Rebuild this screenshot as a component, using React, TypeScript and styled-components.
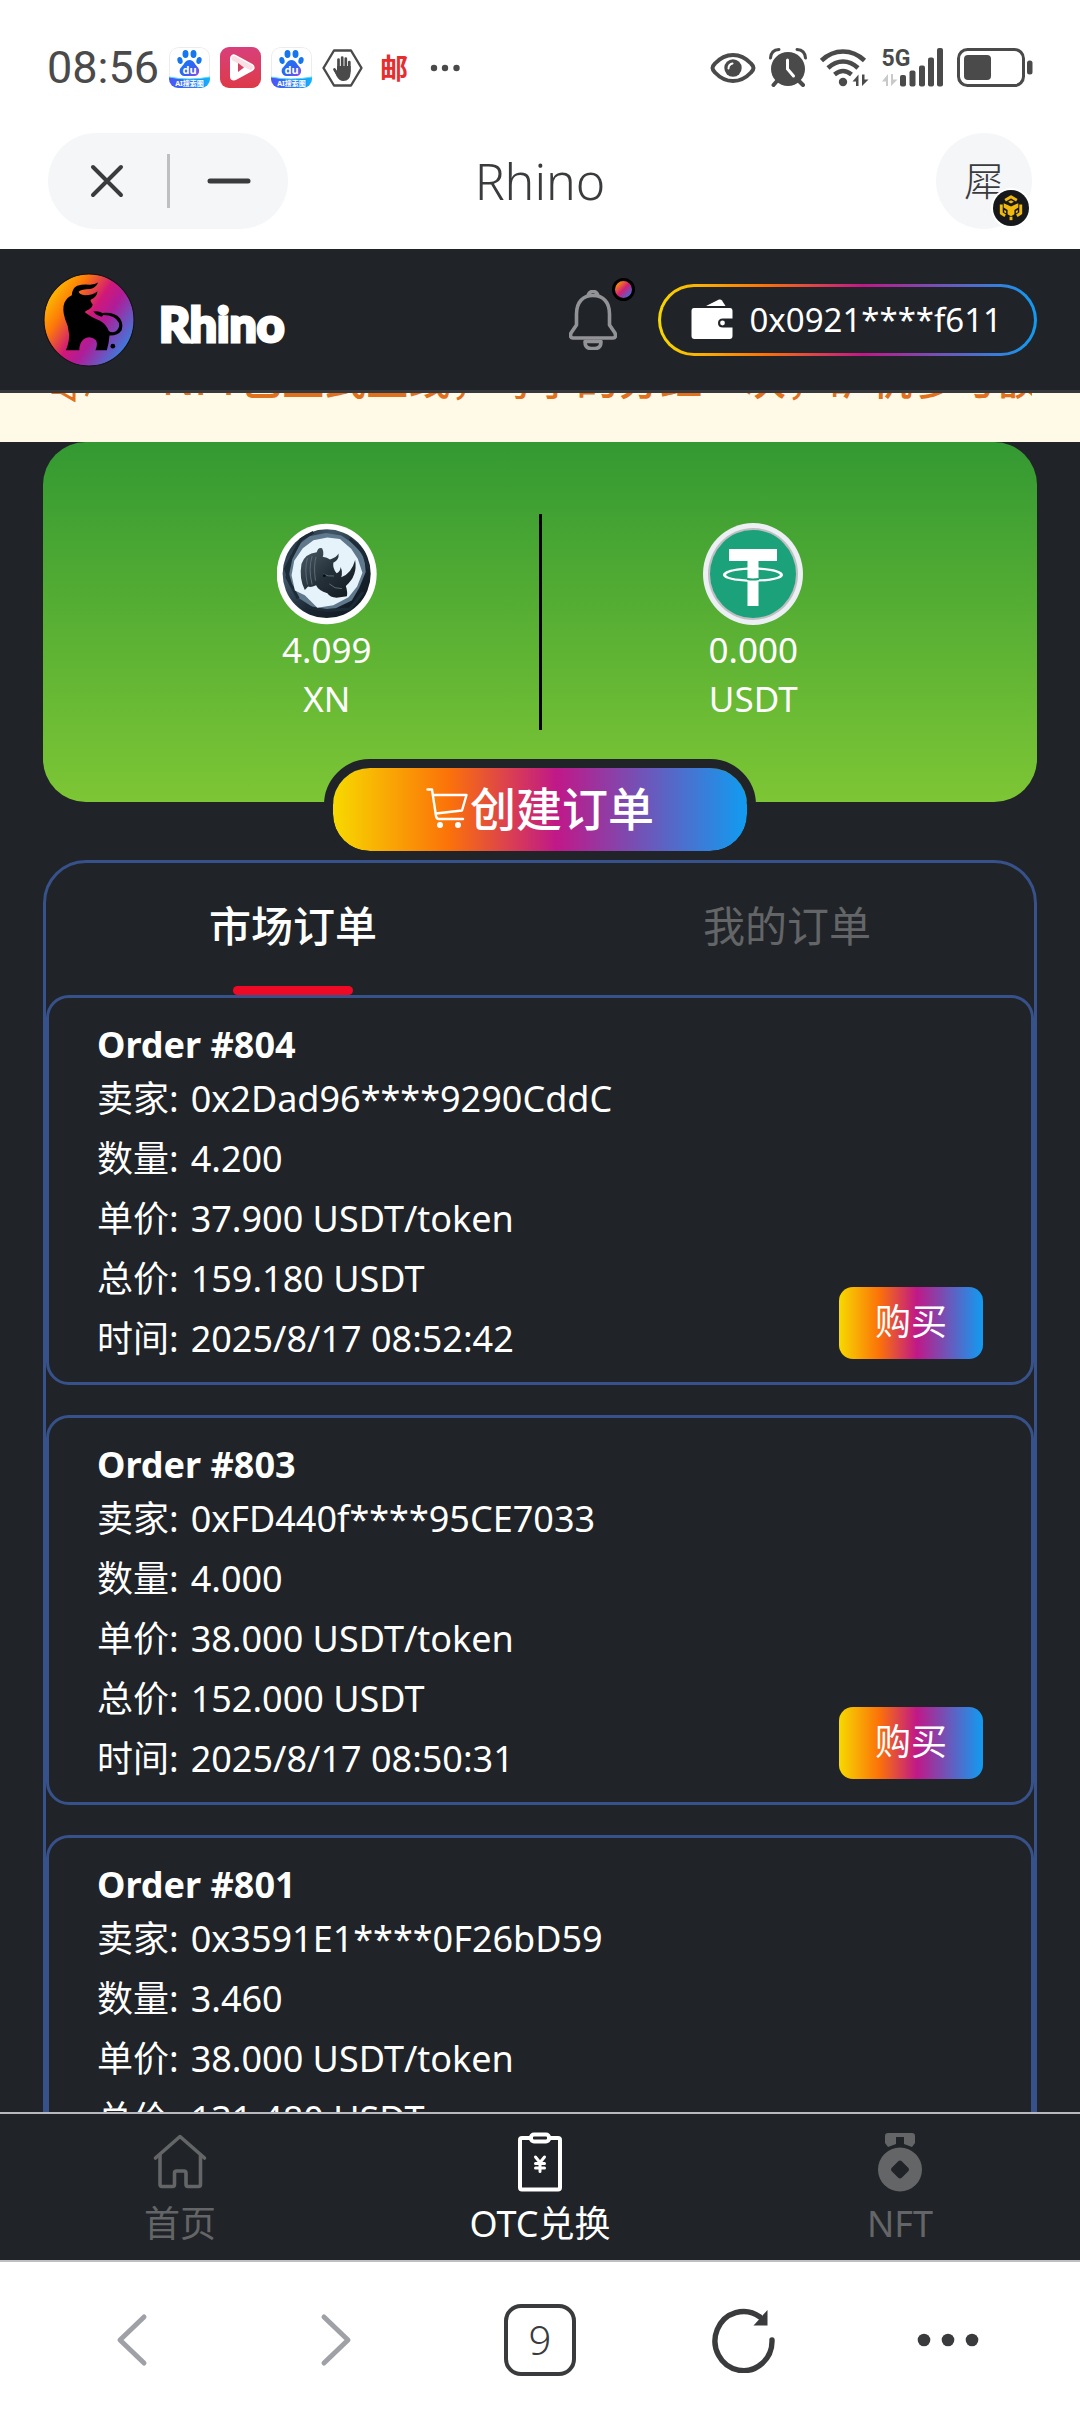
import React, { useState } from "react";
import styled, { createGlobalStyle } from "styled-components";

const RAINBOW = "linear-gradient(90deg, #f7d900 0%, #fb7209 28%, #c01888 54%, #109cf1 100%)";
const DARK = "#202328";
const BLUE = "#37518a";
const INK = "#3a3b3d";
const MUTED = "#646566";

const GlobalStyle = createGlobalStyle`
  *, *::before, *::after { box-sizing: border-box; }
  body {
    margin: 0;
    background: #fff;
    font-family: "Noto Sans", "Noto Sans CJK SC", sans-serif;
    font-size: 36px;
  }
  h1, h2, p, ul, dl, dd, dt { margin: 0; padding: 0; }
  ul { list-style: none; }
  button {
    font: inherit;
    color: inherit;
    background: none;
    border: 0;
    padding: 0;
    cursor: pointer;
  }
  svg { display: block; flex: none; }
`;

const Screen = styled.div`
  display: flex;
  flex-direction: column;
  height: 100vh;
  overflow: hidden;
  background: #fff;
`;

/* ---------- phone status bar ---------- */

const StatusBar = styled.div`
  flex: none;
  display: flex;
  align-items: center;
  justify-content: space-between;
  height: 133px;
  padding: 2px 47px 0;
  color: #4a4a4a;
`;

const StatusGroup = styled.div<{ $gap: number }>`
  display: flex;
  align-items: center;
  gap: ${(p) => p.$gap}px;
`;

const Clock = styled.span`
  font-family: Roboto, sans-serif;
  font-size: 45px;
  line-height: 48px;
`;

const MailMark = styled.span`
  width: 30px;
  margin: 0 11px 0 6px;
  text-align: center;
  font-size: 28px;
  line-height: 40px;
  font-weight: 700;
  color: #e62e2e;
`;

/* ---------- browser title bar ---------- */

const TitleBar = styled.header`
  flex: none;
  display: grid;
  grid-template-columns: 1fr auto 1fr;
  align-items: center;
  padding: 0 48px 20px;
  color: ${INK};
`;

const Capsule = styled.div`
  display: flex;
  align-items: center;
  width: 240px;
  height: 96px;
  border-radius: 48px;
  background: #f4f6f8;
`;

const CapsuleButton = styled.button`
  flex: 1;
  height: 96px;
  display: grid;
  place-items: center;
`;

const CapsuleLine = styled.span`
  width: 3px;
  height: 54px;
  background: #bcc0c1;
`;

const PageTitle = styled.h1`
  font-size: 50px;
  line-height: 64px;
  font-weight: 300;
`;

const Avatar = styled.button`
  position: relative;
  justify-self: end;
  width: 96px;
  height: 96px;
  border-radius: 50%;
  background: #f4f6f8;
  font-size: 40px;
  line-height: 96px;
  font-weight: 300;
`;

const ChainBadge = styled.span`
  position: absolute;
  right: 1px;
  bottom: 1px;
  border-radius: 50%;
  border: 2px solid #fff;
`;

/* ---------- app header ---------- */

const AppHeader = styled.header`
  flex: none;
  display: flex;
  align-items: center;
  height: 144px;
  padding: 0 43px;
  background: ${DARK};
  border-bottom: 3px solid #35393d;
  color: #fff;
`;

const Brand = styled.a`
  display: flex;
  align-items: center;
  gap: 24px;
  margin-right: auto;
  color: #fff;
  text-decoration: none;
`;

const BrandName = styled.span`
  padding-top: 8px;
  font-family: Lato, sans-serif;
  font-size: 48px;
  line-height: 56px;
  font-weight: 900;
  -webkit-text-stroke: 3px #fff;
`;

const BellButton = styled.button`
  position: relative;
  width: 48px;
  height: 60px;
  margin-right: 41px;
`;

const BellDot = styled.span`
  position: absolute;
  top: -12px;
  right: -18px;
  width: 23px;
  height: 23px;
  border: 3px solid #000;
  border-radius: 50%;
  background: linear-gradient(135deg, #fb8a09 15%, #d01f78 50%, #3d6fd8 90%);
`;

const WalletButton = styled.button`
  display: flex;
  align-items: center;
  gap: 16px;
  height: 72px;
  padding: 0 32px 0 30px;
  border: 3px solid transparent;
  border-radius: 36px;
  background: linear-gradient(${DARK}, ${DARK}) padding-box, ${RAINBOW} border-box;
  font-size: 33px;
  line-height: 48px;
`;

/* ---------- scrolled content ---------- */

const Content = styled.main`
  flex: 1;
  min-height: 0;
  overflow: hidden;
  background: ${DARK};
  color: #fff;
`;

const Notice = styled.div`
  display: flex;
  align-items: flex-end;
  gap: 60px;
  height: 49px;
  padding: 0 48px 33px 51px;
  overflow: hidden;
  background: #fff9e8;
  color: #e0701c;

  svg {
    margin-bottom: 7px;
  }
`;

const NoticeText = styled.p`
  flex: 1;
  min-width: 0;
  overflow: hidden;
  white-space: nowrap;
  font-size: 42px;
  line-height: 60px;
  font-weight: 500;
`;

const BalanceCard = styled.section`
  display: grid;
  grid-template-columns: 1fr 3px 1fr;
  align-items: center;
  margin: 0 43px;
  padding: 72px 0;
  border-radius: 43px;
  background: linear-gradient(180deg, #339932 0%, #7dc635 100%);
`;

const BalanceLine = styled.span`
  height: 216px;
  background: #000;
`;

const Balance = styled.div<{ $side: "left" | "right" }>`
  display: flex;
  flex-direction: column;
  align-items: center;
  padding-top: 2px;
  padding-left: ${(p) => (p.$side === "left" ? "72px" : "0")};
  padding-right: ${(p) => (p.$side === "right" ? "72px" : "0")};
`;

const BalanceText = styled.span`
  font-size: 35px;
  line-height: 49px;
`;

const CreateButton = styled.button`
  position: relative;
  display: flex;
  align-items: center;
  justify-content: center;
  gap: 2px;
  width: 432px;
  height: 101px;
  margin: -43px auto 0;
  padding-bottom: 4px;
  border: 9px solid ${DARK};
  border-radius: 46px;
  background: ${RAINBOW} padding-box;
  font-size: 46px;
  line-height: 60px;
  font-weight: 500;
  color: #fff;
`;

const Panel = styled.section`
  margin: 0 43px;
  border: 3px solid ${BLUE};
  border-radius: 43px 43px 0 0;
`;

const Tabs = styled.div`
  display: flex;
`;

const Tab = styled.button<{ $active: boolean }>`
  position: relative;
  flex: 1;
  height: 132px;
  padding-bottom: 6px;
  font-size: 42px;
  line-height: 60px;
  font-weight: ${(p) => (p.$active ? 500 : 400)};
  color: ${(p) => (p.$active ? "#fff" : MUTED)};
`;

const TabMarker = styled.span`
  position: absolute;
  left: 50%;
  bottom: 0;
  width: 120px;
  height: 9px;
  margin-left: -60px;
  border-radius: 9px;
  background: #ee0a24;
`;

const OrderList = styled.ul`
  display: flex;
  flex-direction: column;
  gap: 30px;
`;

const OrderCard = styled.li`
  display: flex;
  align-items: flex-end;
  justify-content: space-between;
  padding: 23px 48px 13px;
  border: 3px solid ${BLUE};
  border-radius: 23px;
`;

const OrderTitle = styled.h2`
  font-size: 36px;
  line-height: 48px;
  font-weight: 700;
`;

const OrderRow = styled.div`
  display: flex;
  gap: 12px;
  font-size: 36px;
  line-height: 60px;
  white-space: nowrap;
`;

const BuyButton = styled.button`
  width: 144px;
  height: 72px;
  margin-bottom: 10px;
  padding-bottom: 2px;
  border-radius: 14px;
  background: ${RAINBOW};
  font-size: 36px;
  line-height: 48px;
  color: #fff;
`;

/* ---------- bottom bars ---------- */

const AppNav = styled.nav`
  flex: none;
  display: grid;
  grid-template-columns: repeat(3, 1fr);
  height: 148px;
  border-top: 2px solid #b9b8bf;
  background: ${DARK};
`;

const NavLink = styled.a<{ $active: boolean }>`
  display: flex;
  flex-direction: column;
  align-items: center;
  gap: 8px;
  padding-top: 18px;
  font-size: 36px;
  line-height: 48px;
  text-decoration: none;
  color: ${(p) => (p.$active ? "#fff" : MUTED)};
`;

const BrowserBar = styled.nav`
  flex: none;
  display: grid;
  grid-template-columns: repeat(5, 1fr);
  height: 152px;
  padding: 6px 30px 0;
  border-top: 2px solid #bcc0c1;
  background: #fff;
  color: ${INK};
`;

const BarButton = styled.button<{ $dim?: boolean }>`
  display: grid;
  place-items: center;
  color: ${(p) => (p.$dim ? "#9fa1a6" : INK)};
`;

const TabCount = styled.span`
  width: 72px;
  height: 72px;
  border: 4px solid ${INK};
  border-radius: 17px;
  font-size: 40px;
  line-height: 64px;
  font-weight: 300;
  text-align: center;
`;

/* ---------- drawings ---------- */

const BaiduIcon = ({ id }: { id: string }) => (
  <svg width="41" height="41" viewBox="0 0 41 41">
    <defs>
      <linearGradient id={id} x1="0" x2="1">
        <stop offset="0" stopColor="#4d55f3" />
        <stop offset="0.6" stopColor="#2a7cf8" />
        <stop offset="1" stopColor="#12b5fb" />
      </linearGradient>
      <linearGradient id={id + "p"} x1="0" x2="1" y1="0" y2="1">
        <stop offset="0" stopColor="#157cf3" />
        <stop offset="0.6" stopColor="#3560f0" />
        <stop offset="1" stopColor="#9a4be8" />
      </linearGradient>
      <clipPath id={id + "c"}>
        <rect width="41" height="41" rx="9" />
      </clipPath>
    </defs>
    <g clipPath={`url(#${id}c)`}>
      <rect x="0.5" y="0.5" width="40" height="40" rx="9" fill="#fff" stroke="#ececec" />
      <path d="M0 30Q20 34 41 30V41H0Z" fill={`url(#${id})`} />
      <path d="M0 30Q20 34 41 30" stroke="#4fe0ee" fill="none" />
    </g>
    <g fill="#1676f0">
      <ellipse cx="16.500" cy="7" rx="3" ry="4" />
      <ellipse cx="24.500" cy="7" rx="3" ry="4" />
      <ellipse cx="11" cy="13.500" rx="2.600" ry="3.600" transform="rotate(-12 11 13.5)" />
      <ellipse cx="30" cy="13.500" rx="2.600" ry="3.600" transform="rotate(12 30 13.5)" />
    </g>
    <path d="M20.500 13C25 13 25.500 17 28.500 20C31 22.500 31 28 26 29H15C10 28 9.500 22.500 12.500 20C15.500 17 16 13 20.500 13Z" fill={`url(#${id}p)`} />
    <text x="20.500" y="26.500" fontSize="11" fontWeight="700" fill="#fff" textAnchor="middle">du</text>
    <text x="20.500" y="39" fontSize="7" fontWeight="700" fill="#fff" textAnchor="middle">AI搜索图</text>
  </svg>
);

const PlayIcon = () => (
  <svg width="41" height="41" viewBox="0 0 41 41">
    <defs>
      <linearGradient id="play" x1="0" x2="0" y1="0" y2="1">
        <stop offset="0" stopColor="#d8407c" />
        <stop offset="1" stopColor="#dd3a48" />
      </linearGradient>
    </defs>
    <rect width="41" height="41" rx="9" fill="url(#play)" />
    <path d="M14 11.500V29.500L30.500 20.500Z" fill="#fff" stroke="#fff" strokeWidth="8" strokeLinejoin="round" />
    <path d="M14 11.500L30.500 20.500" stroke="#f9dfe6" strokeWidth="5" strokeLinecap="round" />
    <path d="M18 16V25L24 20.500Z" fill="#d93f5e" />
  </svg>
);

const HandIcon = () => (
  <svg width="41" height="38" viewBox="0 0 41 38">
    <path d="M12 1.500H29L39.500 19L29 36.500H12L1.500 19Z" fill="none" stroke="#4a4a4a" strokeWidth="2.400" strokeLinejoin="round" />
    <g stroke="#4a4a4a" strokeWidth="2.700" strokeLinecap="round" fill="none">
      <path d="M16.500 10.500V20M20.200 8.500V20M23.800 9.500V20M27.300 13V22M12.500 20.500L16 26" />
    </g>
    <path d="M15 17H28.600V24Q28 32 21.500 32Q17 32 14.500 27L12 21L15 22Z" fill="#4a4a4a" />
  </svg>
);

const MoreDots = () => (
  <svg width="30" height="8" viewBox="0 0 30 8" fill="#4a4a4a">
    <circle cx="4" cy="4" r="3.200" />
    <circle cx="15" cy="4" r="3.200" />
    <circle cx="26.500" cy="4" r="3.200" />
  </svg>
);

const EyeIcon = () => (
  <svg width="46" height="32" viewBox="0 0 46 32">
    <path d="M2.500 16Q2.500 14 5 11.500Q13 3 23 3Q33 3 41 11.500Q43.500 14 43.500 16Q43.500 18 41 20.500Q33 29 23 29Q13 29 5 20.500Q2.500 18 2.500 16Z" fill="none" stroke="#4a4a4a" strokeWidth="4" />
    <circle cx="23" cy="16" r="8.700" fill="#4a4a4a" />
    <path d="M18.500 16.500Q18.500 12.500 22.500 11.500" fill="none" stroke="#fff" strokeWidth="2" strokeLinecap="round" />
  </svg>
);

const AlarmIcon = () => (
  <svg width="38" height="39" viewBox="0 0 38 39">
    <circle cx="19" cy="21" r="17" fill="#4a4a4a" />
    <path d="M8 33L4.500 37M30 33L34 37" stroke="#4a4a4a" strokeWidth="4" strokeLinecap="round" />
    <path d="M1.500 10Q2 2 10 1.500M36.500 10Q36 2 28 1.500" stroke="#4a4a4a" strokeWidth="3" strokeLinecap="round" fill="none" />
    <path d="M18.500 12V21L24.500 28" stroke="#fff" strokeWidth="3" strokeLinecap="round" fill="none" />
  </svg>
);

const WifiIcon = () => (
  <svg width="49" height="38" viewBox="0 0 49 38">
    <g fill="none" stroke="#4a4a4a" strokeWidth="4.600">
      <path d="M1.500 11.500Q11 2.500 23 2.500Q35 2.500 44.500 11.500" />
      <path d="M8 19Q15 12.500 23 12.500Q31 12.500 38 19" />
      <path d="M14.500 25.500Q19 22 23 22Q27 22 31.500 25.500" />
    </g>
    <circle cx="23" cy="33" r="4.200" fill="#4a4a4a" />
    <path d="M38.500 25.500V37H36V32.500H32.500ZM42 37V25.500H44.500L44.500 30.500H48.500Z" fill="#4a4a4a" />
  </svg>
);

const SignalIcon = () => (
  <svg width="62" height="39" viewBox="0 0 62 39" fill="#4a4a4a">
    <text x="-0.500" y="18" fontSize="23" fontWeight="700" fontFamily="Roboto, sans-serif">5G</text>
    <path d="M6 26V38H4V33.500H0ZM9 38V26H11V31.500H15.500Z" fill="#c9c9c9" />
    <rect x="18" y="27" width="6" height="11.500" rx="2" />
    <rect x="27.500" y="22.500" width="6" height="16" rx="2" />
    <rect x="37" y="17.500" width="6" height="21" rx="2" />
    <rect x="46" y="9.500" width="6" height="29" rx="2" />
    <rect x="55" y="0" width="6" height="38.500" rx="2" />
  </svg>
);

const BatteryIcon = () => (
  <svg width="76" height="39" viewBox="0 0 76 39">
    <rect x="1.500" y="1.500" width="65" height="36" rx="9" fill="none" stroke="#4a4a4a" strokeWidth="3" />
    <rect x="7" y="7" width="27" height="25" rx="4" fill="#4a4a4a" />
    <rect x="70" y="12.500" width="5.500" height="14" rx="2.500" fill="#4a4a4a" />
  </svg>
);

const CloseIcon = () => (
  <svg width="34" height="34" viewBox="0 0 34 34">
    <path d="M3 3L31 31M31 3L3 31" stroke={INK} strokeWidth="4" strokeLinecap="round" />
  </svg>
);

const MinusIcon = () => (
  <svg width="44" height="6" viewBox="0 0 44 6">
    <path d="M3 3H41" stroke={INK} strokeWidth="5" strokeLinecap="round" />
  </svg>
);

const ChainIcon = () => (
  <svg width="36" height="36" viewBox="0 0 37 37">
    <circle cx="18.500" cy="18.500" r="18.500" fill="#17181b" />
    <g fill="none" stroke="#f0b90b" strokeWidth="3" strokeLinejoin="round">
      <path d="M12.500 10.500L18.500 7L24.500 10.500" />
      <path d="M8.500 15V24L12.500 26.500M28.500 15V24L24.500 26.500" />
      <path d="M18.500 27.500V31" />
    </g>
    <path d="M18.500 10.500L21.500 12.200L18.500 14L15.500 12.200Z" fill="#f0b90b" />
    <path d="M11 13.500L18.500 17L26 13.500V18L22 20.500V25L18.500 27L15 25V20.500L11 18Z" fill="#f0b90b" />
    <path d="M11.500 20.500L13.500 21.700V24L11.500 22.800ZM25.500 20.500L23.500 21.700V24L25.500 22.800Z" fill="#f0b90b" />
  </svg>
);

const BullLogo = () => (
  <svg width="92" height="94" viewBox="10 32 274 280">
    <defs>
      <linearGradient id="bull" x1="0" y1="0.150" x2="1" y2="0.850">
        <stop offset="0.050" stopColor="#fbc400" />
        <stop offset="0.260" stopColor="#fd7a08" />
        <stop offset="0.480" stopColor="#d01878" />
        <stop offset="0.620" stopColor="#b01c98" />
        <stop offset="0.950" stopColor="#2f86e4" />
      </linearGradient>
    </defs>
    <ellipse cx="147" cy="172" rx="134" ry="137" fill="url(#bull)" stroke="#151013" strokeWidth="3" />
    <path d="M174 60Q168 76 150 80Q125 80 116 88Q118 96 135 98Q160 98 172 86Q172 102 152 112Q150 116 158 126Q158 134 148 140Q140 144 134 148Q150 162 180 174Q200 186 206 205Q216 212 228 205Q240 194 236 180Q225 157 190 157L185 162Q170 161 160 147Q175 144 187 151Q225 148 240 168Q250 185 244 203Q232 219 208 218Q207 238 200 262H166Q174 245 168 232Q150 216 130 230Q118 242 118 262H78Q88 240 88 215Q86 190 76 170Q66 140 74 120Q82 104 96 98Q96 78 112 70Q130 64 150 67Q166 66 174 60Z" fill="#000" />
    <circle cx="218" cy="250" r="7" fill="#000" />
  </svg>
);

const BellIcon = () => (
  <svg width="48" height="60" viewBox="0 0 48 60" fill="none" stroke="#929396" strokeWidth="3.600" strokeLinejoin="round">
    <path d="M7.500 35V24C7.500 12 14 5.500 24 5.500C34 5.500 40.500 12 40.500 24V35L46 43Q47.500 48 44 48H4Q0.500 48 2 43Z" />
    <path d="M19 6Q20 1.500 24 1.500Q28 1.500 29 6" />
    <path d="M16 51.500H32Q32 58.500 26 58.500H22Q16 58.500 16 51.500Z" />
  </svg>
);

const WalletIcon = () => (
  <svg width="42" height="41" viewBox="0 0 42 41">
    <path d="M15 7L28 0.500Q30 0 31 1.500L34.500 7Z" fill="#fff" />
    <path d="M3 9H39Q41.500 9 41.500 12V19.500H32Q27 19.500 27 24Q27 28.500 32 28.500H41.500V37Q41.500 40 38.500 40H3.500Q0.500 40 0.500 37V12Q0.500 9 3 9Z" fill="#fff" />
    <circle cx="31.500" cy="24" r="2.400" fill="#fff" />
  </svg>
);

const SpeakerIcon = () => (
  <svg width="51" height="42" viewBox="0 0 51 42" fill="none" stroke="#e0701c" strokeWidth="3">
    <path d="M2 12H10L23 2V40L10 32.500H2Z" />
    <path d="M35 36Q43 21 35 6" />
  </svg>
);

const RhinoCoin = () => (
  <svg width="100" height="102" viewBox="20 24 302 304">
    <defs>
      <linearGradient id="ring" x1="0" y1="0" x2="1" y2="1">
        <stop offset="0" stopColor="#15212d" />
        <stop offset="0.300" stopColor="#3f5567" />
        <stop offset="0.600" stopColor="#1a2631" />
        <stop offset="1" stopColor="#0d161e" />
      </linearGradient>
      <linearGradient id="hide" x1="0" y1="0" x2="1" y2="1">
        <stop offset="0" stopColor="#4b5b66" />
        <stop offset="0.500" stopColor="#25313a" />
        <stop offset="1" stopColor="#10171d" />
      </linearGradient>
    </defs>
    <ellipse cx="170" cy="176" rx="151" ry="152" fill="#fff" />
    <ellipse cx="170" cy="175" rx="133" ry="134" fill="url(#ring)" />
    <path d="M90 84L118 62L168 52L214 60L256 88L284 128L288 170L268 218L246 256L196 280L140 284L88 250L64 214L54 150Z" fill="#5f788b" />
    <path d="M62 210L46 160L72 110L92 72L130 50M240 70L280 110L296 160M110 276L170 286L240 282L280 230M64 120L50 186L84 250" fill="none" stroke="#1d2b37" strokeWidth="9" />
    <path d="M98 98L130 74L172 66L210 70L244 100L264 130L278 172L262 214L236 246L190 270L142 278L104 240L74 226L64 180L72 136Z" fill="#e6f3fa" />
    <path d="M104 224Q86 190 94 145Q104 114 140 110Q144 94 156 98Q163 110 158 124Q172 126 180 132Q200 126 206 114Q208 134 190 142Q188 160 200 174Q212 168 212 155Q219 170 214 186Q245 175 256 134Q264 182 228 212Q234 232 231 243L200 248Q180 246 172 234Q145 226 138 210Q122 218 114 214Z" fill="url(#hide)" />
    <path d="M112 128Q102 160 112 208M126 122Q114 160 126 208M138 124Q130 150 136 196M160 176Q174 184 192 182M178 206Q194 222 216 220" fill="none" stroke="#5b6c78" strokeWidth="3" />
    <circle cx="163" cy="181" r="4" fill="#05090c" />
  </svg>
);

const TetherCoin = () => (
  <svg width="100" height="102" viewBox="0 0 100 102">
    <ellipse cx="50" cy="51" rx="50" ry="51" fill="#eceff3" />
    <ellipse cx="50" cy="51" rx="45" ry="46" fill="#bdbfc0" />
    <ellipse cx="50" cy="51" rx="43" ry="44" fill="#1ca27a" />
    <path d="M26 26H74V38H55.500V83H44.500V38H26Z" fill="#fff" />
    <path d="M20 52C20 42 80 42 80 52C80 61 20 61 20 52ZM23 52C26 58 74 58 77 52C74 45 26 45 23 52Z" fill="#fff" fillRule="evenodd" />
    <path d="M44 56Q50 57 56 56" stroke="#1ca27a" strokeWidth="2" fill="none" />
  </svg>
);

const CartIcon = () => (
  <svg width="42" height="40" viewBox="0 0 42 40" fill="none" stroke="#fff" strokeWidth="2.400" strokeLinecap="round" strokeLinejoin="round">
    <path d="M1.500 1.500H6L10 28Q10.500 31 13 31H37" />
    <path d="M7.500 7H40.500L36 22.500L10 25.500" />
    <circle cx="14" cy="37" r="1.800" fill="#fff" />
    <circle cx="32" cy="37" r="1.800" fill="#fff" />
  </svg>
);

const HomeIcon = () => (
  <svg width="60" height="60" viewBox="0 0 60 60" fill="none" stroke="currentColor" strokeWidth="3.600" strokeLinecap="round" strokeLinejoin="round">
    <path d="M5.500 26L30 4.500L54.500 26" />
    <path d="M10 23V52Q10 54.500 12 54.500H22.500Q24.500 54.500 24.500 52V41Q24.500 39 26.500 39H34Q36 39 36 41V52Q36 54.500 38 54.500H48.500Q50.500 54.500 50.500 52V23" />
  </svg>
);

const ClipboardIcon = () => (
  <svg width="60" height="60" viewBox="0 0 60 60" fill="none" stroke="currentColor" strokeWidth="4" strokeLinejoin="round" strokeLinecap="round">
    <path d="M21 6H12Q10 6 10 8V55.500Q10 57.500 12 57.500H48Q50 57.500 50 55.500V8Q50 6 48 6H39" />
    <rect x="21" y="2.500" width="18" height="7" rx="3" />
    <path d="M25.500 25L30 30.500L34.500 25M25.500 31.500H34.500M25.500 36H34.500M30 31V39.500" strokeWidth="3" />
  </svg>
);

const MedalIcon = () => (
  <svg width="60" height="60" viewBox="0 0 60 60" fill="currentColor">
    <path d="M18 1H42Q45 1 45 4V11L42 15L34 12V5H26V12L18 15L15 11V4Q15 1 18 1Z" />
    <path fillRule="evenodd" d="M30 15.500A22 22 0 1 1 30 59.500A22 22 0 1 1 30 15.500ZM28 29.500L22 35.500Q20 37.500 22 39.500L28 45.500Q30 47.500 32 45.500L38 39.500Q40 37.500 38 35.500L32 29.500Q30 27.500 28 29.500Z" />
  </svg>
);

const Chevron = ({ forward }: { forward?: boolean }) => (
  <svg width="32" height="54" viewBox="0 0 32 54" fill="none" stroke="currentColor" strokeWidth="5" strokeLinecap="round" strokeLinejoin="round">
    <path d={forward ? "M4 4L28 27L4 50" : "M28 4L4 27L28 50"} />
  </svg>
);

const ReloadIcon = () => (
  <svg width="64" height="66" viewBox="0 0 64 66">
    <path d="M60 33A28.500 29.500 0 1 1 48 10" fill="none" stroke={INK} strokeWidth="5.400" strokeLinecap="round" />
    <path d="M55.500 3V18.500H41.500Z" fill={INK} />
  </svg>
);

const MenuDots = () => (
  <svg width="62" height="14" viewBox="0 0 62 14" fill={INK}>
    <circle cx="7" cy="7" r="6.300" />
    <circle cx="31" cy="7" r="6.300" />
    <circle cx="55" cy="7" r="6.300" />
  </svg>
);

/* ---------- data ---------- */

const orders = [
  { id: 804, seller: "0x2Dad96****9290CddC", amount: "4.200", price: "37.900", total: "159.180", time: "2025/8/17 08:52:42" },
  { id: 803, seller: "0xFD440f****95CE7033", amount: "4.000", price: "38.000", total: "152.000", time: "2025/8/17 08:50:31" },
  { id: 801, seller: "0x3591E1****0F26bD59", amount: "3.460", price: "38.000", total: "131.480", time: "2025/8/17 08:47:15" },
];

const tabs = ["市场订单", "我的订单"];

const navItems = [
  { label: "首页", Icon: HomeIcon },
  { label: "OTC兑换", Icon: ClipboardIcon },
  { label: "NFT", Icon: MedalIcon },
];

const Order = ({ order }: { order: (typeof orders)[number] }) => {
  const rows = [
    ["卖家:", order.seller],
    ["数量:", order.amount],
    ["单价:", `${order.price} USDT/token`],
    ["总价:", `${order.total} USDT`],
    ["时间:", order.time],
  ];
  return (
    <OrderCard>
      <div>
        <OrderTitle>Order #{order.id}</OrderTitle>
        <dl>
          {rows.map(([label, value]) => (
            <OrderRow key={label}>
              <dt>{label}</dt>
              <dd>{value}</dd>
            </OrderRow>
          ))}
        </dl>
      </div>
      <BuyButton type="button">购买</BuyButton>
    </OrderCard>
  );
};

export default function App() {
  const [tab, setTab] = useState(0);
  return (
    <Screen>
      <GlobalStyle />
      <StatusBar>
        <StatusGroup $gap={10}>
          <Clock>08:56</Clock>
          <BaiduIcon id="baidu1" />
          <PlayIcon />
          <BaiduIcon id="baidu2" />
          <HandIcon />
          <MailMark>邮</MailMark>
          <MoreDots />
        </StatusGroup>
        <StatusGroup $gap={13}>
          <EyeIcon />
          <AlarmIcon />
          <WifiIcon />
          <SignalIcon />
          <BatteryIcon />
        </StatusGroup>
      </StatusBar>

      <TitleBar>
        <Capsule>
          <CapsuleButton type="button" aria-label="关闭"><CloseIcon /></CapsuleButton>
          <CapsuleLine />
          <CapsuleButton type="button" aria-label="最小化"><MinusIcon /></CapsuleButton>
        </Capsule>
        <PageTitle>Rhino</PageTitle>
        <Avatar type="button">
          犀
          <ChainBadge><ChainIcon /></ChainBadge>
        </Avatar>
      </TitleBar>

      <AppHeader>
        <Brand href="#home">
          <BullLogo />
          <BrandName>Rhino</BrandName>
        </Brand>
        <BellButton type="button" aria-label="通知">
          <BellIcon />
          <BellDot />
        </BellButton>
        <WalletButton type="button">
          <WalletIcon />
          0x0921****f611
        </WalletButton>
      </AppHeader>

      <Content>
        <Notice>
          <SpeakerIcon />
          <NoticeText>NFT已正式上线，每季的分红一次，矿机参与额度</NoticeText>
        </Notice>

        <BalanceCard>
          <Balance $side="left">
            <RhinoCoin />
            <BalanceText>4.099</BalanceText>
            <BalanceText>XN</BalanceText>
          </Balance>
          <BalanceLine />
          <Balance $side="right">
            <TetherCoin />
            <BalanceText>0.000</BalanceText>
            <BalanceText>USDT</BalanceText>
          </Balance>
        </BalanceCard>

        <CreateButton type="button">
          <CartIcon />
          创建订单
        </CreateButton>

        <Panel>
          <Tabs role="tablist">
            {tabs.map((name, i) => (
              <Tab key={name} type="button" role="tab" aria-selected={tab === i} $active={tab === i} onClick={() => setTab(i)}>
                {name}
                {tab === i && <TabMarker />}
              </Tab>
            ))}
          </Tabs>
          <OrderList>
            {orders.map((o) => (
              <Order key={o.id} order={o} />
            ))}
          </OrderList>
        </Panel>
      </Content>

      <AppNav>
        {navItems.map(({ label, Icon }, i) => (
          <NavLink key={label} href={`#nav${i}`} $active={i === 1}>
            <Icon />
            {label}
          </NavLink>
        ))}
      </AppNav>

      <BrowserBar>
        <BarButton type="button" $dim aria-label="后退"><Chevron /></BarButton>
        <BarButton type="button" $dim aria-label="前进"><Chevron forward /></BarButton>
        <BarButton type="button"><TabCount>9</TabCount></BarButton>
        <BarButton type="button" aria-label="刷新"><ReloadIcon /></BarButton>
        <BarButton type="button" aria-label="菜单"><MenuDots /></BarButton>
      </BrowserBar>
    </Screen>
  );
}
